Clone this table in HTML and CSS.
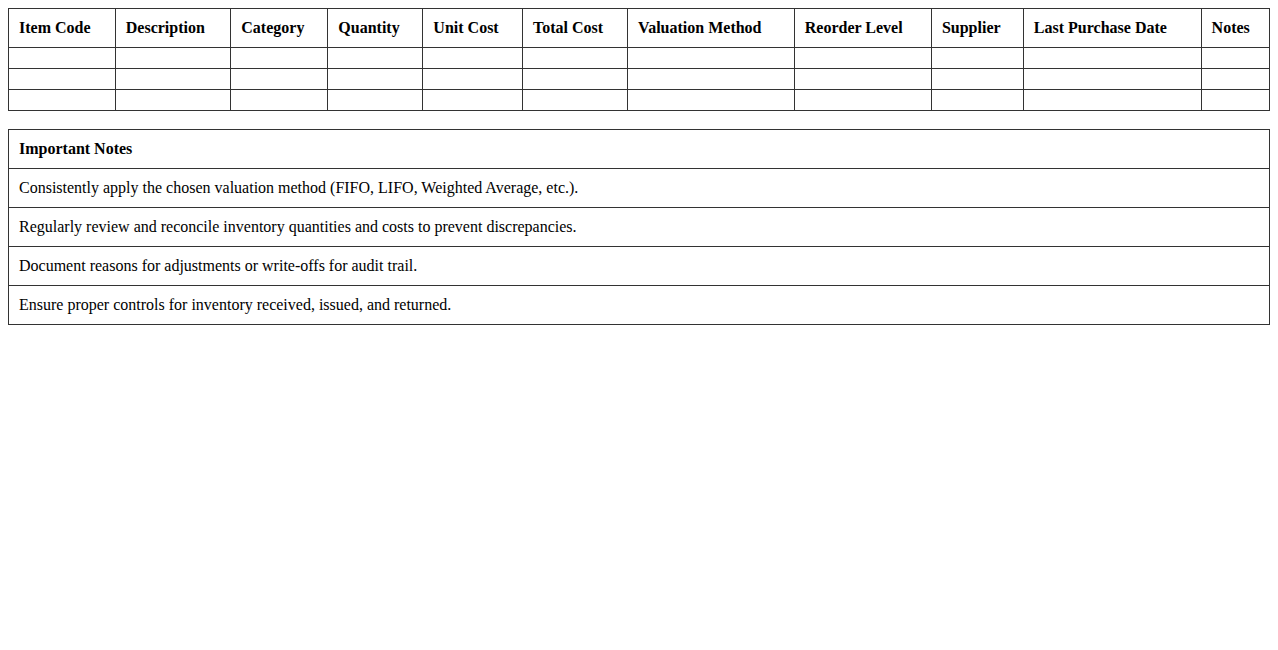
FILE: index.html
```html
<!DOCTYPE html>
<html>
<head>
<meta charset="utf-8">
<link rel="stylesheet" href="styles.css">
</head>
<body>
<table class="grid">
  <thead>
    <tr>
      <th>Item Code</th><th>Description</th><th>Category</th><th>Quantity</th><th>Unit Cost</th><th>Total Cost</th><th>Valuation Method</th><th>Reorder Level</th><th>Supplier</th><th>Last Purchase Date</th><th>Notes</th>
    </tr>
  </thead>
  <tbody>
    <tr><td></td><td></td><td></td><td></td><td></td><td></td><td></td><td></td><td></td><td></td><td></td></tr>
    <tr><td></td><td></td><td></td><td></td><td></td><td></td><td></td><td></td><td></td><td></td><td></td></tr>
    <tr><td></td><td></td><td></td><td></td><td></td><td></td><td></td><td></td><td></td><td></td><td></td></tr>
  </tbody>
</table>
<table class="grid notes">
  <thead><tr><th>Important Notes</th></tr></thead>
  <tbody>
    <tr><td>Consistently apply the chosen valuation method (FIFO, LIFO, Weighted Average, etc.).</td></tr>
    <tr><td>Regularly review and reconcile inventory quantities and costs to prevent discrepancies.</td></tr>
    <tr><td>Document reasons for adjustments or write-offs for audit trail.</td></tr>
    <tr><td>Ensure proper controls for inventory received, issued, and returned.</td></tr>
  </tbody>
</table>
</body>
</html>
```
FILE: styles.css
```css
body {
  margin: 8px;
  font-family: "Liberation Serif", "Times New Roman", serif;
  font-size: 16px;
  color: #000;
  background: #fff;
}
.grid {
  width: 100%;
  border-collapse: collapse;
}
.grid th,
.grid td {
  border: 1px solid #333;
  padding: 10px;
  text-align: left;
}
.grid th {
  font-weight: bold;
}
.notes {
  margin-top: 18px;
}
```
